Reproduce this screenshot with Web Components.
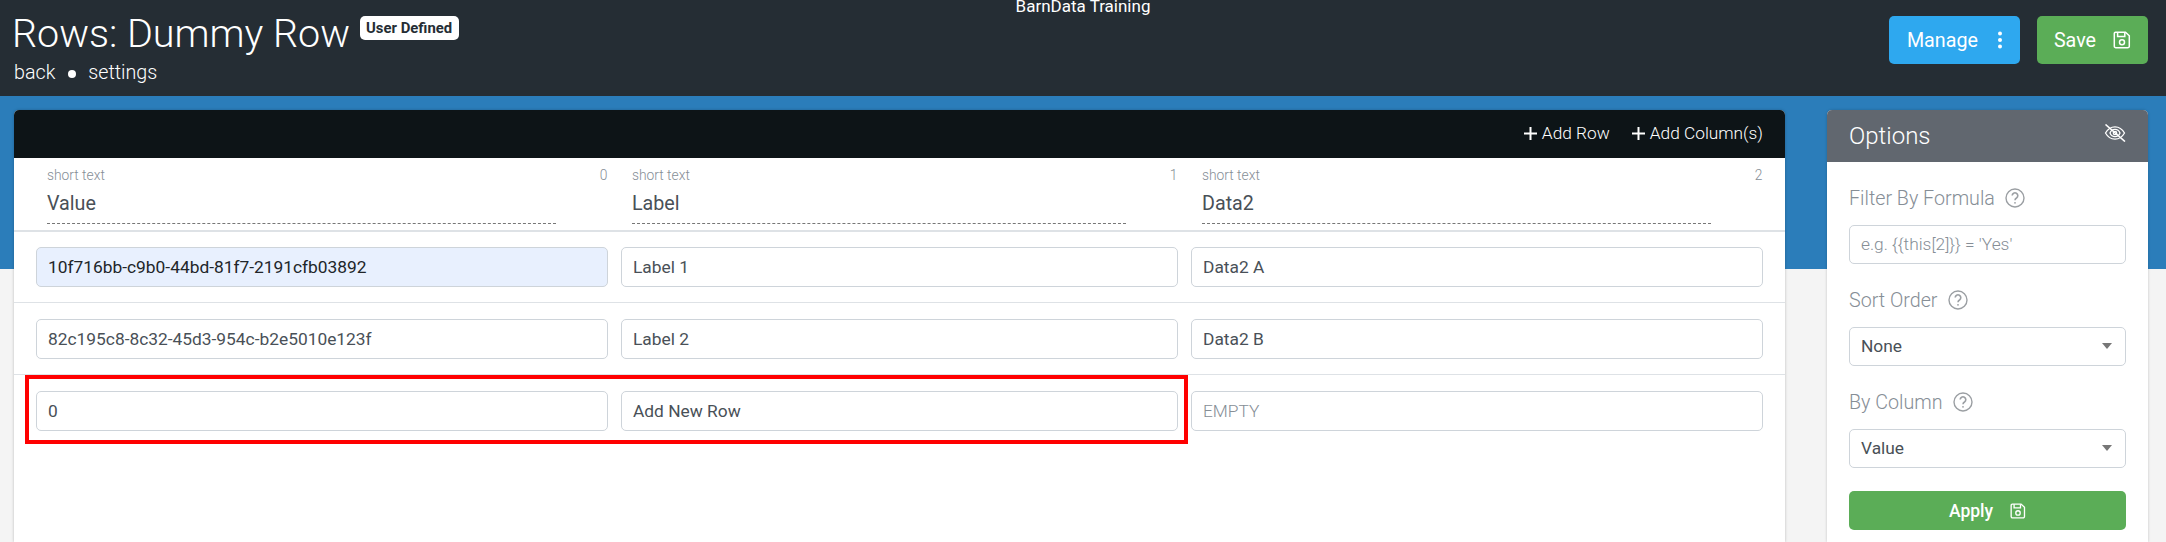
<!DOCTYPE html>
<html>
<head>
<meta charset="utf-8">
<title>Rows: Dummy Row</title>
<style>
  html, body { margin: 0; height: 100%; overflow: hidden; }
  body { font-family: Roboto, "Liberation Sans", sans-serif; background: #f4f4f4; }
</style>
</head>
<body>
<rows-app>
  <page-header slot="header">
    <span slot="center">BarnData Training</span>
    <span slot="title">Rows: Dummy Row</span>
    <span slot="badge">User Defined</span>
    <span slot="crumbs">back</span>
    <span slot="crumbs2">settings</span>
    <action-button slot="actions" tone="blue" icon="dots">Manage</action-button>
    <action-button slot="actions" tone="green" icon="save">Save</action-button>
  </page-header>

  <data-table slot="main">
    <span slot="tools">Add Row</span>
    <span slot="tools2">Add Column(s)</span>
    <column-head slot="head" index="0" kind="short text">Value</column-head>
    <column-head slot="head" index="1" kind="short text">Label</column-head>
    <column-head slot="head" index="2" kind="short text">Data2</column-head>

    <table-row slot="rows">
      <text-field filled>10f716bb-c9b0-44bd-81f7-2191cfb03892</text-field>
      <text-field>Label 1</text-field>
      <text-field>Data2 A</text-field>
    </table-row>
    <table-row slot="rows">
      <text-field>82c195c8-8c32-45d3-954c-b2e5010e123f</text-field>
      <text-field>Label 2</text-field>
      <text-field>Data2 B</text-field>
    </table-row>
    <table-row slot="rows" marked last>
      <text-field>0</text-field>
      <text-field>Add New Row</text-field>
      <text-field placeholder>EMPTY</text-field>
    </table-row>
  </data-table>

  <options-card slot="side">
    <span slot="title">Options</span>
    <option-group label="Filter By Formula"><text-field placeholder compact>e.g. {{this[2]}} = 'Yes'</text-field></option-group>
    <option-group label="Sort Order"><text-field select compact>None</text-field></option-group>
    <option-group label="By Column"><text-field select compact>Value</text-field></option-group>
    <action-button slot="footer" tone="green" icon="save" wide>Apply</action-button>
  </options-card>
</rows-app>

<script>
const saveIcon = `<svg width="18" height="18" viewBox="0 0 18 18" fill="none" stroke="currentColor" stroke-width="1.5">
  <path d="M2.5 1.2h10l3.8 3.6v10.4a1.6 1.6 0 0 1-1.6 1.6H2.900a1.6 1.6 0 0 1-1.6-1.6V2.400a1.2 1.2 0 0 1 1.2-1.2z"/>
  <path d="M4.6 1.4v4h7.2v-4"/>
  <circle cx="9" cy="11.2" r="2.5"/>
</svg>`;
const dotsIcon = `<svg width="6" height="18" viewBox="0 0 6 18" fill="currentColor">
  <circle cx="3" cy="2.500" r="2"/><circle cx="3" cy="9" r="2"/><circle cx="3" cy="15.500" r="2"/>
</svg>`;

class RowsApp extends HTMLElement {
  constructor() {
    super();
    this.attachShadow({ mode: 'open' }).innerHTML = `
      <style>
        :host { display: flex; flex-direction: column; height: 542px; overflow: hidden; }
        main {
          flex: 1;
          min-height: 0;
          display: flex;
          gap: 42px;
          padding: 14px 18px 0 14px;
          background: linear-gradient(#2b7dba 173px, #f4f4f4 173px);
        }
        ::slotted([slot=main]) { flex: 1; min-width: 0; }
        ::slotted([slot=side]) { flex: 0 0 321px; }
      </style>
      <slot name="header"></slot>
      <main><slot name="main"></slot><slot name="side"></slot></main>`;
  }
}

class PageHeader extends HTMLElement {
  constructor() {
    super();
    this.attachShadow({ mode: 'open' }).innerHTML = `
      <style>
        :host {
          display: flex;
          justify-content: space-between;
          position: relative;
          height: 96px;
          box-sizing: border-box;
          padding: 10px 18px 0 12px;
          background: #252d34;
          color: #fff;
        }
        .center {
          position: absolute;
          top: 0;
          left: 0;
          right: 0;
          text-align: center;
          font-size: 17px;
          line-height: 12px;
        }
        .title-line { display: flex; align-items: flex-start; gap: 9.5px; }
        .title { font-size: 39.5px; line-height: 48px; font-weight: 300; }
        .badge {
          margin-top: 6px;
          height: 24px;
          padding: 0 6.5px;
          line-height: 24px;
          font-size: 14.875px;
          font-weight: 700;
          background: #fff;
          color: #252d34;
          border-radius: 5px;
        }
        .crumbs {
          display: flex;
          align-items: center;
          margin: 3px 0 0 2px;
          font-size: 19.7px;
          line-height: 24px;
          font-weight: 300;
        }
        .dot { width: 8px; height: 8px; margin: 1px 12.5px 0; border-radius: 50%; background: #fff; }
        .actions { display: flex; gap: 17px; padding-top: 6px; align-items: flex-start; }
      </style>
      <div class="center"><slot name="center"></slot></div>
      <div>
        <div class="title-line">
          <div class="title"><slot name="title"></slot></div>
          <div class="badge"><slot name="badge"></slot></div>
        </div>
        <div class="crumbs"><slot name="crumbs"></slot><span class="dot"></span><slot name="crumbs2"></slot></div>
      </div>
      <div class="actions"><slot name="actions"></slot></div>`;
  }
}

class ActionButton extends HTMLElement {
  constructor() {
    super();
    const wide = this.hasAttribute('wide');
    const dots = this.getAttribute('icon') === 'dots';
    const bg = this.getAttribute('tone') === 'blue' ? '#2ea8ef' : '#5bad57';
    this.attachShadow({ mode: 'open' }).innerHTML = `
      <style>
        :host {
          display: ${wide ? 'flex' : 'inline-flex'};
          align-items: center;
          justify-content: center;
          gap: ${dots ? '19px' : '17px'};
          height: ${wide ? 39 : 48}px;
          padding: 0 17px 0 ${dots ? 18 : 17}px;
          box-sizing: border-box;
          border-radius: 5px;
          background: ${bg};
          color: #fff;
          font-size: ${wide ? 17.5 : 19.7}px;
          font-weight: ${wide ? 500 : 400};
        }
        svg { display: block; ${wide ? 'width: 16px; height: 16px;' : ''} }
      </style>
      <slot></slot>${dots ? dotsIcon : saveIcon}`;
  }
}

class DataTable extends HTMLElement {
  constructor() {
    super();
    const plus = `<svg width="13" height="13" viewBox="0 0 13 13" stroke="currentColor" stroke-width="2"><path d="M6.500 0v13M0 6.500h13"/></svg>`;
    this.attachShadow({ mode: 'open' }).innerHTML = `
      <style>
        :host {
          display: block;
          background: #fff;
          border-radius: 5px 5px 0 0;
          box-shadow: 0 0 3px rgba(0, 0, 0, 0.25);
        }
        .bar {
          display: flex;
          justify-content: flex-end;
          align-items: center;
          gap: 22px;
          height: 48px;
          padding: 0 22px 2px 0;
          box-sizing: border-box;
          background: #0d1417;
          color: #fff;
          border-radius: 5px 5px 0 0;
          font-size: 17.3px;
          font-weight: 300;
        }
        .tool { display: flex; align-items: center; gap: 5px; }
        .head {
          display: grid;
          grid-template-columns: 571.5px 556.5px 571.5px;
          column-gap: 13.5px;
          padding: 0 22px;
          height: 74px;
          box-sizing: border-box;
          border-bottom: 2px solid #dee2e6;
        }
      </style>
      <div class="bar">
        <div class="tool">${plus}<slot name="tools"></slot></div>
        <div class="tool">${plus}<slot name="tools2"></slot></div>
      </div>
      <div class="head"><slot name="head"></slot></div>
      <slot name="rows"></slot>`;
  }
}

class ColumnHead extends HTMLElement {
  constructor() {
    super();
    this.attachShadow({ mode: 'open' }).innerHTML = `
      <style>
        :host { display: block; padding: 9px 0 0 11px; color: #495057; }
        .meta {
          display: flex;
          justify-content: space-between;
          font-size: 13.8px;
          line-height: 16px;
          font-weight: 300;
          color: #868e96;
        }
        .name {
          margin-right: 52px;
          margin-top: 7px;
          padding-bottom: 6px;
          font-size: 19.7px;
          line-height: 27px;
          border-bottom: 1px dashed #777;
        }
      </style>
      <div class="meta"><span>${this.getAttribute('kind')}</span><span>${this.getAttribute('index')}</span></div>
      <div class="name"><slot></slot></div>`;
  }
}

class TableRow extends HTMLElement {
  constructor() {
    super();
    const marked = this.hasAttribute('marked') ? '<div class="mark"></div>' : '';
    this.attachShadow({ mode: 'open' }).innerHTML = `
      <style>
        :host {
          display: grid;
          grid-template-columns: 571.5px 556.5px 571.5px;
          column-gap: 13.5px;
          position: relative;
          padding: 15px 22px;
          border-bottom: 1px solid #dee2e6;
        }
        :host(:not(:first-of-type)) { padding-top: 16px; }
        :host([last]) { border-bottom: 0; }
        .mark {
          position: absolute;
          left: 11px;
          top: 0;
          width: 1163px;
          height: 69px;
          box-sizing: border-box;
          border: 4px solid #f00;
        }
      </style>
      <slot></slot>${marked}`;
  }
}

class TextField extends HTMLElement {
  constructor() {
    super();
    const select = this.hasAttribute('select');
    this.attachShadow({ mode: 'open' }).innerHTML = `
      <style>
        :host {
          display: flex;
          align-items: center;
          justify-content: space-between;
          height: 40px;
          box-sizing: border-box;
          padding: 0 13px 0 11px;
          background: #fff;
          border: 1px solid #ced4da;
          border-radius: 5px;
          font-size: 17.35px;
          color: #495057;
        }
        :host([compact]) { height: 39.5px; }
        :host([filled]) { background: #e8f0fe; color: #212529; }
        :host([placeholder]) { color: #868e96; font-weight: 300; }
        .arrow {
          width: 0;
          height: 0;
          border: 5px solid transparent;
          border-top: 6px solid #777;
          border-bottom: 0;
        }
      </style>
      <slot></slot>${select ? '<span class="arrow"></span>' : ''}`;
  }
}

class OptionsCard extends HTMLElement {
  constructor() {
    super();
    this.attachShadow({ mode: 'open' }).innerHTML = `
      <style>
        :host {
          display: block;
          background: #fff;
          border-radius: 5px 5px 0 0;
          box-shadow: 0 0 3px rgba(0, 0, 0, 0.2);
        }
        .top {
          display: flex;
          justify-content: space-between;
          align-items: center;
          height: 52px;
          padding: 0 22px;
          box-sizing: border-box;
          background: #61676f;
          color: #fff;
          border-radius: 5px 5px 0 0;
          font-size: 24px;
          font-weight: 300;
        }
        svg { display: block; margin-top: -6px; }
        .body { padding: 24px 22px 0; }
        ::slotted([slot=footer]) { margin-top: -1px; }
      </style>
      <div class="top">
        <slot name="title"></slot>
        <svg width="22" height="18" viewBox="0 0 22 18" fill="none" stroke="currentColor" stroke-width="1.3">
          <path d="M1.500 9C4 4.600 7.200 2.800 11 2.800S18 4.600 20.500 9C18 13.400 14.800 15.200 11 15.200S4 13.400 1.500 9z"/>
          <path d="M6 9c1-2.600 2.800-3.700 5-3.700s4 1.100 5 3.700c-1 2.600-2.800 3.700-5 3.700S7 11.600 6 9z"/>
          <circle cx="11" cy="9" r="1.700"/>
          <path d="M1.500.5l19.500 17" stroke-width="1.600"/>
        </svg>
      </div>
      <div class="body"><slot></slot><slot name="footer"></slot></div>`;
  }
}

class OptionGroup extends HTMLElement {
  constructor() {
    super();
    this.attachShadow({ mode: 'open' }).innerHTML = `
      <style>
        :host { display: block; padding-bottom: 24px; }
        .label {
          display: flex;
          align-items: center;
          gap: 10px;
          height: 24px;
          margin-bottom: 14.5px;
          font-size: 19.7px;
          font-weight: 300;
          color: #868e96;
        }
      </style>
      <div class="label">
        <span>${this.getAttribute('label')}</span>
        <svg width="20" height="20" viewBox="0 0 20 20" fill="none" stroke="#9b9fa3" stroke-width="1.4">
          <circle cx="10" cy="10" r="9"/>
          <path d="M7.200 7.600a2.800 2.800 0 1 1 4.300 2.400c-1 .6-1.500 1.200-1.500 2.300" stroke-width="1.600"/>
          <circle cx="10" cy="14.800" r=".9" fill="#9b9fa3" stroke="none"/>
        </svg>
      </div>
      <slot></slot>`;
  }
}

customElements.define('rows-app', RowsApp);
customElements.define('page-header', PageHeader);
customElements.define('action-button', ActionButton);
customElements.define('data-table', DataTable);
customElements.define('column-head', ColumnHead);
customElements.define('table-row', TableRow);
customElements.define('text-field', TextField);
customElements.define('options-card', OptionsCard);
customElements.define('option-group', OptionGroup);
</script>
</body>
</html>
